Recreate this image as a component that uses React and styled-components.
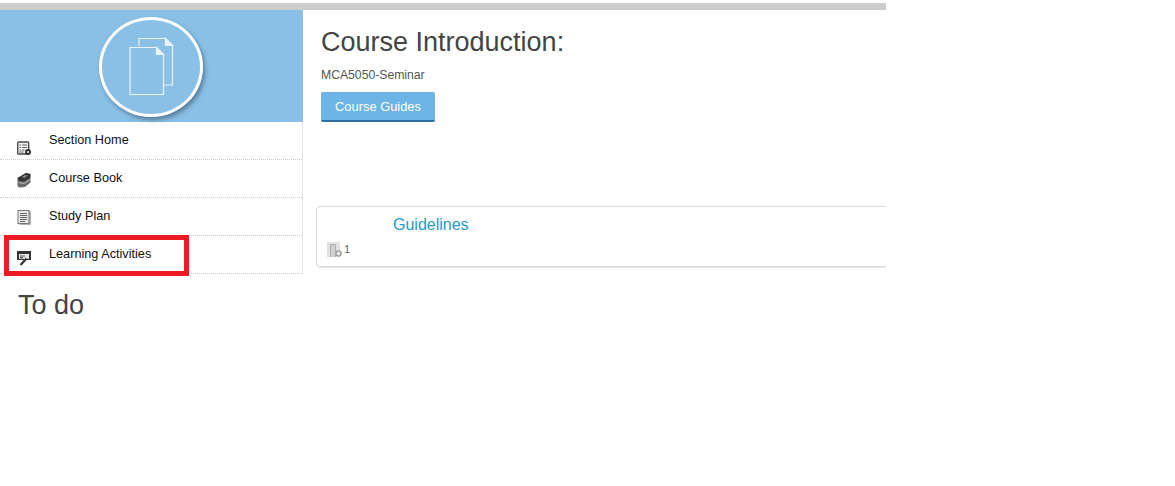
import styled, { createGlobalStyle } from "styled-components";

const GlobalStyle = createGlobalStyle`
	html, body {
		margin: 0;
		padding: 0;
		background: #fff;
	}
	body {
		font-family: "Liberation Sans", Arial, sans-serif;
		color: #333;
	}
`;

function SectionHomeIcon() {
	return (
		<svg width="16" height="16" viewBox="0 0 16 16">
			<rect x="1.7" y="1" width="11" height="12" rx="1" fill="#f2f2f2" stroke="#4a4a4a" strokeWidth="1.4" />
			<path d="M3.5 4h1.5M6 4h5M3.5 6.5h1.5M6 6.5h5M3.5 9h1.5M6 9h2.5M3.5 11h4" stroke="#666" strokeWidth="1.1" />
			<circle cx="12" cy="11" r="3" fill="#333" />
			<circle cx="12" cy="11" r="1" fill="#fff" />
		</svg>
	);
}

function BookIcon() {
	return (
		<svg width="16" height="16" viewBox="0 0 16 16">
			<path d="M1.5 6 L10 1 L14.5 2 L14.5 10.5 L9 15 L3.5 15.5 Q1 15 1.5 11 Z" fill="#6a6a6a" />
			<path d="M1.5 6 L10 1 L14.5 2 L14 6 L8 9.5 L3 9 Z" fill="#333" />
			<path d="M2.5 10.5 L8 11.5 L14 7.500" stroke="#bbb" strokeWidth="1" fill="none" />
			<path d="M5.500 5 L9.500 3 L12 3.500 L8.500 6 Z" fill="#8a8a8a" />
		</svg>
	);
}

function PlanIcon() {
	return (
		<svg width="16" height="16" viewBox="0 0 16 16">
			<rect x="3" y="1" width="12" height="14" rx="1" fill="#b5b5b5" />
			<rect x="2" y="0.5" width="11" height="13" fill="#e8e8e8" stroke="#777" strokeWidth="1" />
			<path d="M4 3.500h7M4 5.500h7M4 7.500h7M4 9.500h7M4 11.500h5" stroke="#666" strokeWidth="1" />
		</svg>
	);
}

function ActivityIcon() {
	return (
		<svg width="16" height="16" viewBox="0 0 16 16">
			<path d="M1 1h14v9h-4.500v-1.500H13V4H3v4.500h5V10H1z" fill="#333" />
			<rect x="3" y="4" width="10" height="4.500" fill="#e6e6e6" />
			<path d="M4 5.500h5v1H4zM4 7h3v1H4z" fill="#555" />
			<path d="M4.500 15 L10.500 8.500" stroke="#333" strokeWidth="2.200" />
		</svg>
	);
}

function PagesIcon() {
	return (
		<svg width="48" height="60" viewBox="0 0 48 60" fill="none" stroke="#e8f3fb" strokeWidth="1.2">
			<path d="M11 9V1.500H37.500L44.500 8.500V48H36" />
			<path d="M37.500 1.500L44.500 8.500H37.500Z" fill="#e8f3fb" />
			<path d="M2 10.500H28.500L35.500 17.500V57.500H2Z" />
			<path d="M28.500 10.500L35.500 17.500H28.500Z" fill="#e8f3fb" />
		</svg>
	);
}

function CountIcon() {
	return (
		<svg width="15" height="15" viewBox="0 0 15 15">
			<rect x="0" y="0" width="13" height="15" fill="#e2e2e2" />
			<path d="M3.500 15V2.500H8.500V15" fill="#d0d0d0" stroke="#b0b0b0" strokeWidth="1" />
			<circle cx="11.500" cy="11.500" r="2.600" fill="#e8e8e8" stroke="#9a9a9a" strokeWidth="1.300" />
		</svg>
	);
}

const menuItems = [
	{ label: "Section Home", icon: <SectionHomeIcon />, iconTop: 19 },
	{ label: "Course Book", icon: <BookIcon />, iconTop: 12 },
	{ label: "Study Plan", icon: <PlanIcon />, iconTop: 12 },
	{ label: "Learning Activities", icon: <ActivityIcon />, iconTop: 14 },
];

export default function App() {
	return (
		<>
			<GlobalStyle />
			<Page>
				<TopBar />
				<Columns>
					<Sidebar>
						<Banner>
							<Badge>
								<PagesIcon />
							</Badge>
						</Banner>
						<Menu>
							{menuItems.map((item) => (
								<MenuRow key={item.label}>
									<MenuIcon $top={item.iconTop}>{item.icon}</MenuIcon>
									<MenuLabel>{item.label}</MenuLabel>
								</MenuRow>
							))}
							<Highlight />
						</Menu>
						<TodoTitle>To do</TodoTitle>
					</Sidebar>
					<Main>
						<Title>Course Introduction:</Title>
						<Code>MCA5050-Seminar</Code>
						<GuideButton>Course Guides</GuideButton>
						<Card>
							<CardTitle>Guidelines</CardTitle>
							<CardCount>
								<CountIcon />
								<span>1</span>
							</CardCount>
						</Card>
					</Main>
				</Columns>
			</Page>
		</>
	);
}

const Page = styled.div`
	width: 886px;
	height: 486px;
	padding-top: 3px;
	box-sizing: border-box;
	overflow: hidden;
`;

const TopBar = styled.div`
	height: 7px;
	background: #cccccc;
`;

const Columns = styled.div`
	display: flex;
`;

const Sidebar = styled.aside`
	width: 303px;
	flex-shrink: 0;
`;

const Banner = styled.div`
	height: 112px;
	background: #8ac0e6;
	display: flex;
	align-items: center;
	justify-content: center;
`;

const Badge = styled.div`
	width: 104px;
	height: 100px;
	box-sizing: border-box;
	border: 3px solid #fff;
	border-radius: 50%;
	box-shadow: 2px 3px 4px rgba(40, 60, 80, 0.5);
	display: flex;
	align-items: center;
	justify-content: center;
	margin-right: 1px;
	margin-top: 1px;

	svg {
		margin-left: 2px;
	}
`;

const Menu = styled.ul`
	position: relative;
	list-style: none;
	margin: 0;
	padding: 0;
	border-right: 1px solid #e6e6e6;
`;

const MenuRow = styled.li`
	height: 38px;
	box-sizing: border-box;
	border-bottom: 1px dotted #cccccc;
	display: flex;
	padding-left: 16px;
`;

const MenuIcon = styled.span`
	width: 33px;
	padding-top: ${(props) => props.$top}px;
	line-height: 0;
`;

const MenuLabel = styled.span`
	font-size: 12.7px;
	line-height: 15px;
	padding-top: 11px;
	color: #111;
`;

const Highlight = styled.div`
	position: absolute;
	left: 4px;
	top: 113px;
	width: 185px;
	height: 41px;
	box-sizing: border-box;
	border: 5px solid #ed1c24;
`;

const TodoTitle = styled.h2`
	margin: 15px 0 0 18px;
	font-size: 27px;
	line-height: 32px;
	font-weight: 400;
	color: #444;
`;

const Main = styled.main`
	flex: 1;
	min-width: 0;
	padding-left: 13px;
`;

const Title = styled.h1`
	margin: 16px 0 0 5px;
	font-size: 27px;
	line-height: 32px;
	font-weight: 400;
	color: #444;
`;

const Code = styled.p`
	margin: 10px 0 0 5px;
	font-size: 12.2px;
	line-height: 14px;
	color: #555;
`;

const GuideButton = styled.button`
	display: block;
	margin: 10px 0 0 5px;
	width: 114px;
	height: 30px;
	box-sizing: border-box;
	padding: 0;
	border: none;
	border-bottom: 2px solid #2d6ea3;
	border-radius: 2px;
	background: #6cb5e6;
	color: #fff;
	font-family: inherit;
	font-size: 12.9px;
`;

const Card = styled.section`
	margin-top: 84px;
	width: 600px;
	height: 61px;
	box-sizing: border-box;
	border: 1px solid #dcdcdc;
	border-radius: 4px;
	box-shadow: 0 1px 1px #e4e4e4;
	padding: 8px 0 0 10px;
`;

const CardTitle = styled.h3`
	margin: 0 0 0 66px;
	font-size: 16px;
	line-height: 19px;
	font-weight: 400;
	color: #1f9bc6;
`;

const CardCount = styled.div`
	display: flex;
	align-items: center;
	gap: 2px;
	margin-top: 8px;
	font-size: 11px;
	line-height: 15px;
	color: #666;
`;
